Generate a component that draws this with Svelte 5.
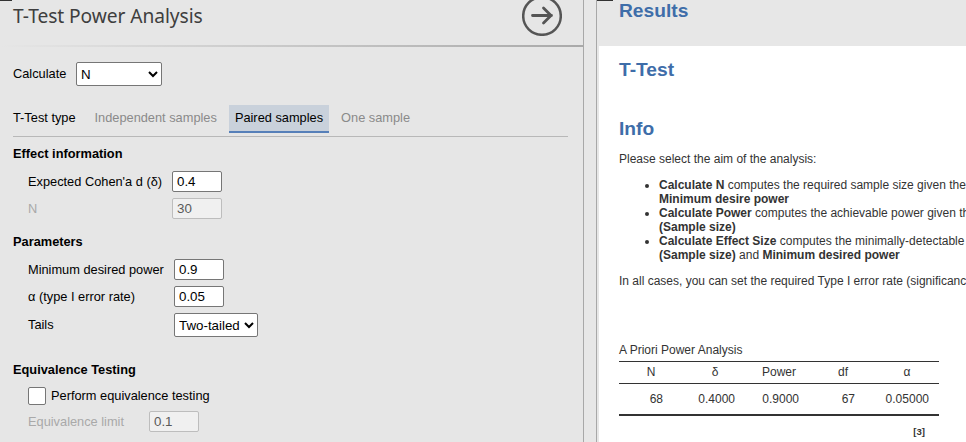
<script>
  const tabs = ['Independent samples', 'Paired samples', 'One sample'];
  let selected = $state('Paired samples');
  const columns = [
    { name: 'N', value: '68', pad: 20 },
    { name: 'δ', value: '0.4000', pad: 12 },
    { name: 'Power', value: '0.9000', pad: 12 },
    { name: 'df', value: '67', pad: 20 },
    { name: 'α', value: '0.05000', pad: 10 }
  ];
</script>

<div class="app">
  <section class="options">
    <i class="notch"></i>
    <header>
      <h1>T-Test Power Analysis</h1>
      <svg width="40" height="40" viewBox="0 0 40 40" fill="none" stroke="#555" stroke-linecap="round" stroke-linejoin="round">
        <circle cx="20" cy="20" r="18.8" stroke-width="2.5" />
        <path d="M10.5 19.5H29.5M21.5 12l7.5 7.5-7.5 7.5" stroke-width="2.8" />
      </svg>
    </header>
    <div class="rule"></div>
    <div class="calc">
      <label for="calc">Calculate</label>
      <select id="calc"><option>N</option></select>
    </div>
    <div class="types">
      <span class="lead">T-Test type</span>
      {#each tabs as tab}
        <button class:active={tab === selected} onclick={() => (selected = tab)}>{tab}</button>
      {/each}
    </div>

    <h2 class="effect">Effect information</h2>
    <div class="fields narrow">
      <label for="d">Expected Cohen'a d (δ)</label><input id="d" value="0.4" />
      <label for="n" class="off">N</label><input id="n" value="30" disabled />
    </div>

    <h2 class="params">Parameters</h2>
    <div class="fields">
      <label for="power">Minimum desired power</label><input id="power" value="0.9" />
      <label for="alpha">α (type I error rate)</label><input id="alpha" value="0.05" />
      <label for="tails" class="tall">Tails</label>
      <select id="tails"><option>Two-tailed</option></select>
    </div>

    <h2 class="equiv">Equivalence Testing</h2>
    <label class="check"><input type="checkbox" />Perform equivalence testing</label>
    <div class="fields limit">
      <label for="limit" class="off">Equivalence limit</label><input id="limit" value="0.1" disabled />
    </div>
  </section>

  <div class="splitter"></div>

  <section class="results">
    <i class="notch"></i>
    <div class="top"><h3>Results</h3></div>
    <div class="page">
      <h3 class="ttest">T-Test</h3>
      <h3 class="info">Info</h3>
      <p>Please select the aim of the analysis:</p>
      <ul>
        <li><b>Calculate N</b> computes the required sample size given the<br /><b>Minimum desire power</b></li>
        <li><b>Calculate Power</b> computes the achievable power given the<br /><b>(Sample size)</b></li>
        <li><b>Calculate Effect Size</b> computes the minimally-detectable<br /><b>(Sample size)</b> and <b>Minimum desired power</b></li>
      </ul>
      <p>In all cases, you can set the required Type I error rate (significance</p>
      <table>
        <caption>A Priori Power Analysis</caption>
        <thead>
          <tr>{#each columns as c}<th>{c.name}</th>{/each}</tr>
        </thead>
        <tbody>
          <tr>{#each columns as c}<td style:padding-right="{c.pad}px">{c.value}</td>{/each}</tr>
        </tbody>
      </table>
      <div class="ref">[3]</div>
    </div>
  </section>
</div>

<style>
  .app {
    display: flex;
    width: 966px;
    height: 442px;
    overflow: hidden;
    background: #e7e7e7;
    font: 12.8px/15px 'Liberation Sans', Arial, sans-serif;
    color: #000;
  }
  .app * { box-sizing: border-box; }
  .options {
    position: relative;
    flex: 0 0 584px;
    border-right: 1px solid #a8a8a8;
    background: #e6e6e6;
  }
  .notch {
    position: absolute;
    top: 0;
    left: 0;
    width: 12px;
    height: 1px;
    background: #333;
  }
  header {
    display: flex;
    justify-content: space-between;
    height: 45px;
    padding: 0 21px 0 13px;
  }
  h1 {
    margin: 2px 0 0;
    font: 400 19.2px/28px 'Noto Sans', 'Open Sans', sans-serif;
    letter-spacing: -0.07px;
    color: #3e3e3e;
  }
  header svg { margin-top: -4px; }
  .rule {
    height: 2px;
    background: linear-gradient(to right, #e6e6e6, #a9a9a9);
  }
  .calc {
    display: flex;
    height: 24px;
    margin: 15px 0 0 13px;
    line-height: 23px;
  }
  .calc label { width: 63px; }
  select {
    height: 24px;
    margin: 0;
    padding: 0;
    border: 1px solid #767676;
    border-radius: 2px;
    background-color: #fff;
    color: #000;
    font: 13.333px 'Liberation Sans', Arial, sans-serif;
  }
  .calc select { width: 86px; }
  .types {
    display: flex;
    width: 555px;
    height: 32px;
    margin: 19px 0 0 13px;
    border-bottom: 1px solid #b8b8b8;
  }
  .lead { width: 75.5px; line-height: 26px; }
  button {
    height: 28px;
    margin-right: 6px;
    padding: 0 6px;
    border: 0;
    border-bottom: 2px solid transparent;
    background: none;
    color: #8a8a8a;
    font: 12.8px/26px 'Liberation Sans', Arial, sans-serif;
  }
  button.active { background: #c9d1db; border-color: #5780b9; color: #000; }
  h2 {
    height: 15px;
    margin: 0 0 0 13px;
    font-size: 12.8px;
    line-height: 15px;
  }
  .effect { margin-top: 9px; }
  .params { margin-top: 15px; }
  .equiv { margin-top: 25px; }
  .fields {
    display: grid;
    grid-template-columns: 146px max-content;
    row-gap: 6px;
    margin: 10px 0 0 28px;
    line-height: 21px;
  }
  .narrow { grid-template-columns: 144px max-content; }
  .limit { grid-template-columns: 121px max-content; margin-top: 6px; }
  .fields input {
    width: 50px;
    height: 21px;
    margin: 0;
    padding: 0 4px;
    border: 1px solid #767676;
    border-radius: 2px;
    background: #fff;
    color: #000;
    font: 13.333px 'Liberation Sans', Arial, sans-serif;
  }
  .fields input:disabled { border-color: #bdbdbd; background: #f0f0f0; color: #5a5a5a; }
  .off { color: #a9a9a9; }
  .tall { line-height: 24px; }
  .fields select { width: 84px; }
  .check {
    display: flex;
    height: 18px;
    margin: 10px 0 0 28px;
    line-height: 18px;
  }
  .check input {
    appearance: none;
    width: 18px;
    height: 18px;
    margin: 0 5px 0 0;
    border: 1px solid #767676;
    border-radius: 2px;
    background: #fff;
  }
  .splitter { flex: 0 0 12px; }
  .results {
    position: relative;
    flex: 1;
    min-width: 0;
    padding-left: 2px;
    overflow: hidden;
    border-left: 1px solid #a8a8a8;
    color: #333;
    font-size: 12px;
    line-height: 14px;
    white-space: nowrap;
  }
  .results .notch { width: 16px; }
  .top { height: 46px; padding-left: 20px; }
  h3 {
    margin: 0;
    color: #3e6da9;
    font-size: 19.2px;
    line-height: 22px;
  }
  .page { height: 396px; padding: 13px 0 0 20px; background: #fff; }
  .info { margin-top: 37px; }
  p { margin: 12px 0; }
  ul { margin: 12px 0; padding-left: 40px; }
  table {
    width: 320px;
    margin-top: 55px;
    border-collapse: separate;
    border-spacing: 0;
    table-layout: fixed;
  }
  caption { height: 18px; text-align: left; }
  th {
    height: 23px;
    padding: 0 0 1px;
    border-top: 1px solid #333;
    border-bottom: 1px solid #333;
    font-weight: 400;
    text-align: center;
  }
  td {
    height: 32px;
    padding: 0;
    border-bottom: 2px solid #333;
    text-align: right;
  }
  .ref {
    width: 306px;
    margin-top: 9px;
    font-size: 9.6px;
    font-weight: 700;
    text-align: right;
  }
</style>
